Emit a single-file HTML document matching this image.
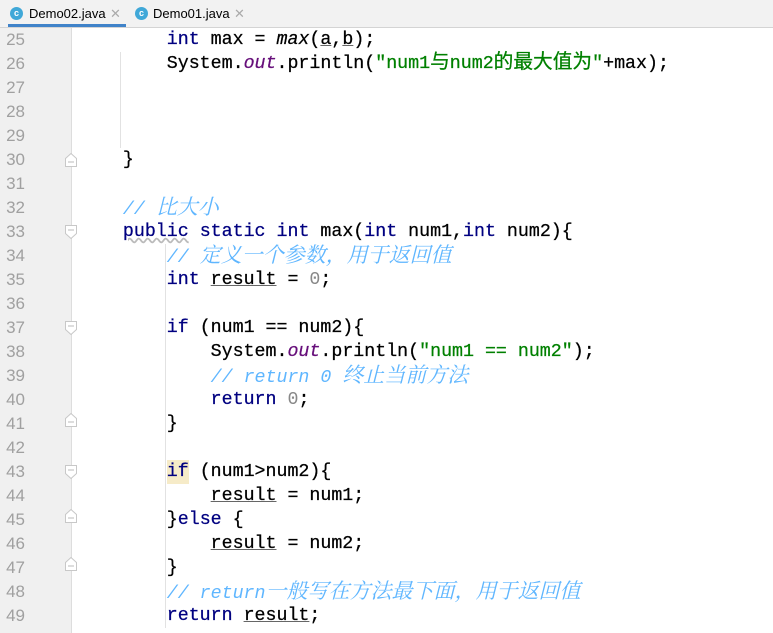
<!DOCTYPE html><html><head><meta charset="utf-8"><style>
body{margin:0;width:773px;height:633px;overflow:hidden;background:#fff;position:relative;font-family:"Liberation Mono","Noto Sans CJK SC",monospace}
.tabs{position:absolute;left:0;top:0;width:773px;height:27px;background:#f2f2f2;border-bottom:1px solid #d4d4d4;font-family:"Liberation Sans",sans-serif;font-size:13px}
.tab{position:absolute;top:0;height:27px;line-height:27px;color:#000}
.ic{position:absolute;top:7px;width:13px;height:13px;border-radius:50%;background:#40a8d8;color:#fff;font-size:9px;line-height:13px;text-align:center;font-weight:bold}
.x{color:#aaa;font-size:13px}
.gut{position:absolute;left:0;top:28px;width:72px;height:605px;background:#f0f0f0}
.fl{position:absolute;left:71px;top:28px;width:1px;height:605px;background:#ddd}
.n{position:absolute;left:0;width:25px;text-align:right;font-family:"Liberation Sans",sans-serif;font-size:17px;color:#a0a0a0;height:24px;line-height:24px}
.l{position:absolute;left:79px;height:24px;line-height:24px;font-size:18.3px;white-space:pre;color:#000;-webkit-text-stroke:0.25px #000}
.l span{line-height:1}
.k{color:#000080;-webkit-text-stroke-color:#000080}.s{color:#008000;-webkit-text-stroke-color:#008000}.c{color:#5fb6ff;font-style:italic;-webkit-text-stroke:0}.o{color:#660e7a;font-style:italic;-webkit-text-stroke-color:#660e7a}.i{font-style:italic}.g{color:#888;-webkit-text-stroke:0}.u{text-decoration:underline;text-decoration-color:#666}
.z{font-family:"Noto Serif CJK SC",serif;font-size:21px}
.y{font-size:19.7px}
.fm{position:absolute;left:65px;width:12px;height:14px}
.ig{position:absolute;width:1px;background:#e2e2e2}
</style></head><body>
<div class="tabs">
<div class="tab" style="left:8px;width:118px;border-bottom:3px solid #4083c9;height:24px"><span class="ic" style="left:2px">c</span><span style="position:absolute;left:21px">Demo02.java</span><span class="x" style="position:absolute;left:102px">✕</span></div>
<div class="tab" style="left:133px;width:120px"><span class="ic" style="left:2px">c</span><span style="position:absolute;left:20px">Demo01.java</span><span class="x" style="position:absolute;left:101px">✕</span></div>
</div>
<div class="gut"></div><div class="fl"></div>
<div class="ig" style="left:120px;top:52px;height:96px"></div>
<div class="ig" style="left:165px;top:244px;height:384px"></div>
<div class="ig" style="left:165px;top:340px;height:72px"></div>
<div class="ig" style="left:165px;top:484px;height:24px"></div>
<div class="ig" style="left:165px;top:532px;height:24px"></div>
<svg class="fm" style="top:153px" viewBox="0 0 12 14"><path d="M.5 13.5V5.5L6 .5l5.5 5v8z" fill="#fff" stroke="#c8c8c8"/><path d="M3 9h6" stroke="#bbb"/></svg>
<svg class="fm" style="top:225px" viewBox="0 0 12 14"><path d="M.5 .5v8L6 13.5l5.5-5v-8z" fill="#fff" stroke="#c8c8c8"/><path d="M3 5h6" stroke="#bbb"/></svg>
<svg class="fm" style="top:321px" viewBox="0 0 12 14"><path d="M.5 .5v8L6 13.5l5.5-5v-8z" fill="#fff" stroke="#c8c8c8"/><path d="M3 5h6" stroke="#bbb"/></svg>
<svg class="fm" style="top:413px" viewBox="0 0 12 14"><path d="M.5 13.5V5.5L6 .5l5.5 5v8z" fill="#fff" stroke="#c8c8c8"/><path d="M3 9h6" stroke="#bbb"/></svg>
<svg class="fm" style="top:465px" viewBox="0 0 12 14"><path d="M.5 .5v8L6 13.5l5.5-5v-8z" fill="#fff" stroke="#c8c8c8"/><path d="M3 5h6" stroke="#bbb"/></svg>
<svg class="fm" style="top:509px" viewBox="0 0 12 14"><path d="M.5 13.5V5.5L6 .5l5.5 5v8z" fill="#fff" stroke="#c8c8c8"/><path d="M3 9h6" stroke="#bbb"/></svg>
<svg class="fm" style="top:557px" viewBox="0 0 12 14"><path d="M.5 13.5V5.5L6 .5l5.5 5v8z" fill="#fff" stroke="#c8c8c8"/><path d="M3 9h6" stroke="#bbb"/></svg>
<div class="n" style="top:28px">25</div><div class="n" style="top:52px">26</div><div class="n" style="top:76px">27</div><div class="n" style="top:100px">28</div><div class="n" style="top:124px">29</div><div class="n" style="top:148px">30</div><div class="n" style="top:172px">31</div><div class="n" style="top:196px">32</div><div class="n" style="top:220px">33</div><div class="n" style="top:244px">34</div><div class="n" style="top:268px">35</div><div class="n" style="top:292px">36</div><div class="n" style="top:316px">37</div><div class="n" style="top:340px">38</div><div class="n" style="top:364px">39</div><div class="n" style="top:388px">40</div><div class="n" style="top:412px">41</div><div class="n" style="top:436px">42</div><div class="n" style="top:460px">43</div><div class="n" style="top:484px">44</div><div class="n" style="top:508px">45</div><div class="n" style="top:532px">46</div><div class="n" style="top:556px">47</div><div class="n" style="top:580px">48</div><div class="n" style="top:604px">49</div>
<div class="l" style="top:28px">        <span class="k">int</span> max = <span class="i">max</span>(<span class="u">a</span>,<span class="u">b</span>);</div>
<div class="l" style="top:52px">        System.<span class="o">out</span>.println(<span class="s">"num1<span class="y">与</span>num2<span class="y">的最大值为</span>"</span>+max);</div>
<div class="l" style="top:148px">    }</div>
<div class="l" style="top:196px">    <span class="c">// <span class="z">比大小</span></span></div>
<div class="l" style="top:220px">    <span class="k" style="text-decoration:underline wavy #bbb">public</span> <span class="k">static int</span> max(<span class="k">int</span> num1,<span class="k">int</span> num2){</div>
<div class="l" style="top:244px">        <span class="c">// <span class="z">定义一个参数，用于返回值</span></span></div>
<div class="l" style="top:268px">        <span class="k">int</span> <span class="u">result</span> = <span class="g">0</span>;</div>
<div class="l" style="top:316px">        <span class="k">if</span> (num1 == num2){</div>
<div class="l" style="top:340px">            System.<span class="o">out</span>.println(<span class="s">"num1 == num2"</span>);</div>
<div class="l" style="top:364px">            <span class="c">// return 0 <span class="z">终止当前方法</span></span></div>
<div class="l" style="top:388px">            <span class="k">return</span> <span class="g">0</span>;</div>
<div class="l" style="top:412px">        }</div>
<div class="l" style="top:460px">        <span class="k" style="background:#f6ebc8;line-height:24px;display:inline-block">if</span> (num1&gt;num2){</div>
<div class="l" style="top:484px">            <span class="u">result</span> = num1;</div>
<div class="l" style="top:508px">        }<span class="k">else</span> {</div>
<div class="l" style="top:532px">            <span class="u">result</span> = num2;</div>
<div class="l" style="top:556px">        }</div>
<div class="l" style="top:580px">        <span class="c">// return<span class="z">一般写在方法最下面，用于返回值</span></span></div>
<div class="l" style="top:604px">        <span class="k">return</span> <span class="u">result</span>;</div>
</body></html>
